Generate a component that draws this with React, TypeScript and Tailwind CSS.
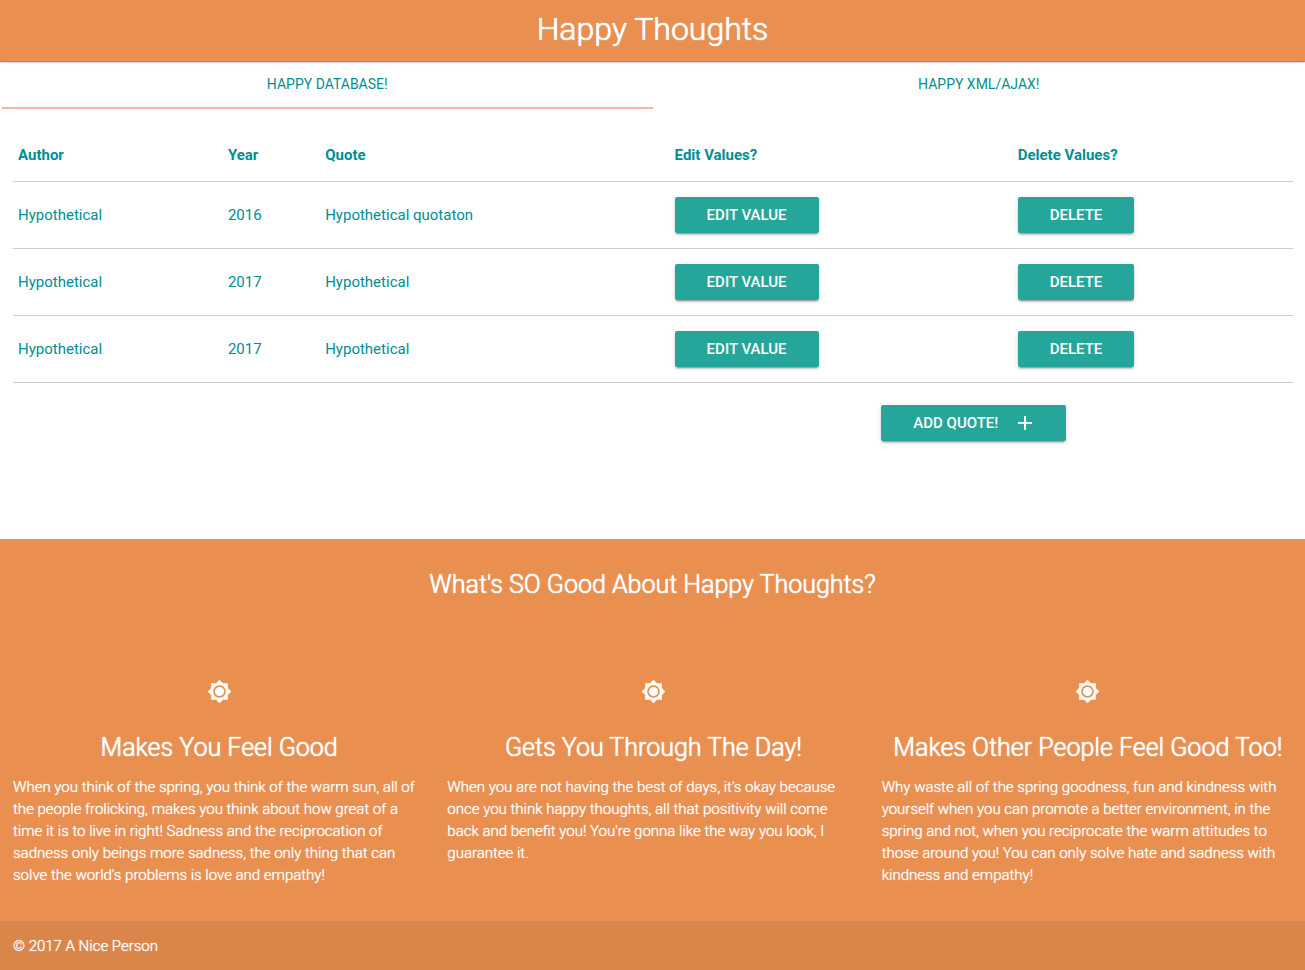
import React from "react";

const quotes = [
  { author: "Hypothetical", year: 2016, quote: "Hypothetical quotaton" },
  { author: "Hypothetical", year: 2017, quote: "Hypothetical" },
  { author: "Hypothetical", year: 2017, quote: "Hypothetical" },
];

const reasons = [
  {
    title: "Makes You Feel Good",
    text: "When you think of the spring, you think of the warm sun, all of the people frolicking, makes you think about how great of a time it is to live in right! Sadness and the reciprocation of sadness only beings more sadness, the only thing that can solve the world's problems is love and empathy!",
  },
  {
    title: "Gets You Through The Day!",
    text: "When you are not having the best of days, it's okay because once you think happy thoughts, all that positivity will come back and benefit you! You're gonna like the way you look, I guarantee it.",
  },
  {
    title: "Makes Other People Feel Good Too!",
    text: "Why waste all of the spring goodness, fun and kindness with yourself when you can promote a better environment, in the spring and not, when you reciprocate the warm attitudes to those around you! You can only solve hate and sadness with kindness and empathy!",
  },
];

const buttonClass =
  "inline-flex h-9 cursor-pointer items-center rounded-xs bg-[#26a69a] px-8 text-[15px] font-medium uppercase text-white shadow-[0_2px_2px_0_rgba(0,0,0,0.14),0_1px_5px_0_rgba(0,0,0,0.12),0_3px_1px_-2px_rgba(0,0,0,0.2)] hover:bg-[#2bbbad]";

const headingGlow = "font-light [text-shadow:0_0_1px_#fff,0_0_1px_#fff]";

function SunIcon() {
  return (
    <svg viewBox="0 0 24 24" className="size-[25px] fill-white" aria-hidden="true">
      <path d="M20 8.69V4h-4.69L12 .69 8.69 4H4v4.69L.69 12 4 15.31V20h4.69L12 23.31 15.31 20H20v-4.69L23.31 12 20 8.69zM12 18c-3.31 0-6-2.69-6-6s2.69-6 6-6 6 2.69 6 6-2.69 6-6 6z" />
      <circle cx="12" cy="12" r="4.4" />
    </svg>
  );
}

export default function App() {
  return (
    <div className="min-h-screen bg-white font-[Roboto,sans-serif] text-[15px] leading-[22px] text-[#008e93]">
      <header className="relative flex h-[61px] items-start justify-center bg-[#e98f50] text-white shadow-[0_1px_1px_0_rgba(0,0,0,0.35),0_2px_2px_0_rgba(0,0,0,0.14)]">
        <h1 className={`text-[32px] leading-[58px] ${headingGlow}`}>Happy Thoughts</h1>
      </header>
      <nav className="grid h-12 grid-cols-2 text-center text-sm leading-[46px] uppercase">
        <a href="#database" className="ml-[2px] border-b-2 border-[#fbb0b5]">Happy Database!</a>
        <a href="#ajax">Happy XML/Ajax!</a>
      </nav>
      <main className="pr-3 pl-[13px] pb-[98px] pt-5">
        <table className="w-full table-fixed border-collapse text-left">
          <colgroup>
            <col className="w-[16.4%]" />
            <col className="w-[7.6%]" />
            <col className="w-[27.3%]" />
            <col className="w-[26.8%]" />
            <col />
          </colgroup>
          <thead>
            <tr className="h-[52px] border-b border-[#d0d0d0]">
              <th className="px-[5px]">Author</th>
              <th className="px-[5px]">Year</th>
              <th className="px-[5px]">Quote</th>
              <th className="px-[5px]">Edit Values?</th>
              <th className="px-[5px]">Delete Values?</th>
            </tr>
          </thead>
          <tbody>
            {quotes.map((q, i) => (
              <tr key={i} className="h-[67px] border-b border-[#d0d0d0]">
                <td className="px-[5px]">{q.author}</td>
                <td className="px-[5px]">{q.year}</td>
                <td className="px-[5px]">{q.quote}</td>
                <td className="px-[5px]"><button type="button" className={buttonClass}>Edit value</button></td>
                <td className="px-[5px]"><button type="button" className={buttonClass}>Delete</button></td>
              </tr>
            ))}
          </tbody>
        </table>
        <div className="mt-[22px] grid grid-cols-3">
          <div className="col-start-3 pl-[15px]">
            <button type="button" className={buttonClass}>
              Add Quote!
              <svg viewBox="0 0 18 18" className="ml-[18px] size-[18px] fill-white" aria-hidden="true">
                <path d="M16 10h-6v6H8v-6H2V8h6V2h2v6h6z" />
              </svg>
            </button>
          </div>
        </div>
      </main>
      <footer className="bg-[#e98f50] text-white">
        <h2 className={`pt-8 text-center text-[25px] leading-7 ${headingGlow}`}>What's SO Good About Happy Thoughts?</h2>
        <div className="grid grid-cols-3 pl-[2px] pb-[35px] pt-20">
          {reasons.map((r) => (
            <section key={r.title} className="px-[11px]">
              <div className="flex justify-center"><SunIcon /></div>
              <h3 className={`mt-[30px] text-center text-[25px] leading-7 ${headingGlow}`}>{r.title}</h3>
              <p className="mt-[14px] font-light [text-shadow:0_0_1px_#fff]">{r.text}</p>
            </section>
          ))}
        </div>
        <div className="bg-[#da864a] px-[13px] pt-[14px] pb-[13px] leading-[22px] font-light [text-shadow:0_0_1px_#fff]">© 2017 A Nice Person</div>
      </footer>
    </div>
  );
}
